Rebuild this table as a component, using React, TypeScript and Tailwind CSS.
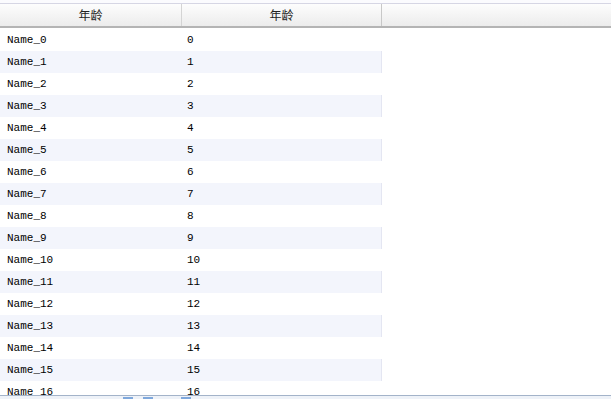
const rows = Array.from({ length: 17 }, (_, i) => ({ name: `Name_${i}`, age: i }));

export default function App() {
  return (
    <div
      className="w-[611px] h-[399px] bg-white overflow-hidden flex flex-col"
      style={{ fontFamily: '"Liberation Mono", "Noto Sans CJK SC", monospace' }}
    >
      <div className="h-[3px] bg-[#fbfbfe]" />
      {/* header */}
      <div className="h-[25px] flex border-t border-[#d6d6e4] border-b-2 border-b-[#b4b4b4] bg-gradient-to-b from-[#fdfdfd] to-[#ececec] text-[12px] text-[#222]">
        <div className="w-[182px] flex items-center justify-center border-r border-[#d4d4d4]">
          <span style={{ fontFamily: '"Noto Sans CJK SC", sans-serif' }}>年龄</span>
        </div>
        <div className="w-[200px] flex items-center justify-center border-r border-[#c8c8c8]">
          <span style={{ fontFamily: '"Noto Sans CJK SC", sans-serif' }}>年龄</span>
        </div>
        <div className="flex-1" />
      </div>
      {/* body */}
      <div className="flex-1 overflow-hidden pt-[1px]">
        {rows.map((r) => (
          <div key={r.age} className="flex h-[22px] text-[11px] text-black">
            <div
              className={`w-[382px] flex items-center ${
                r.age % 2 === 1 ? "bg-[#f3f5fc] border-r border-[#e4e6f2]" : "bg-white"
              }`}
            >
              <div className="w-[180px] pl-[7px]">{r.name}</div>
              <div className="pl-[7px]">{r.age}</div>
            </div>
          </div>
        ))}
      </div>
      {/* bottom strip */}
      <div className="h-[4px] border-t border-[#a3b3c9] bg-[#eef2f8] flex items-start shrink-0">
        <div className="ml-[123px] mt-[1px] flex gap-[10px]">
          <div className="w-[10px] h-[2px] bg-[#7fa8dc]" />
          <div className="w-[10px] h-[2px] bg-[#7fa8dc]" />
          <div className="w-[8px] h-[2px] bg-transparent" />
          <div className="w-[10px] h-[2px] bg-[#7fa8dc]" />
        </div>
      </div>
    </div>
  );
}
